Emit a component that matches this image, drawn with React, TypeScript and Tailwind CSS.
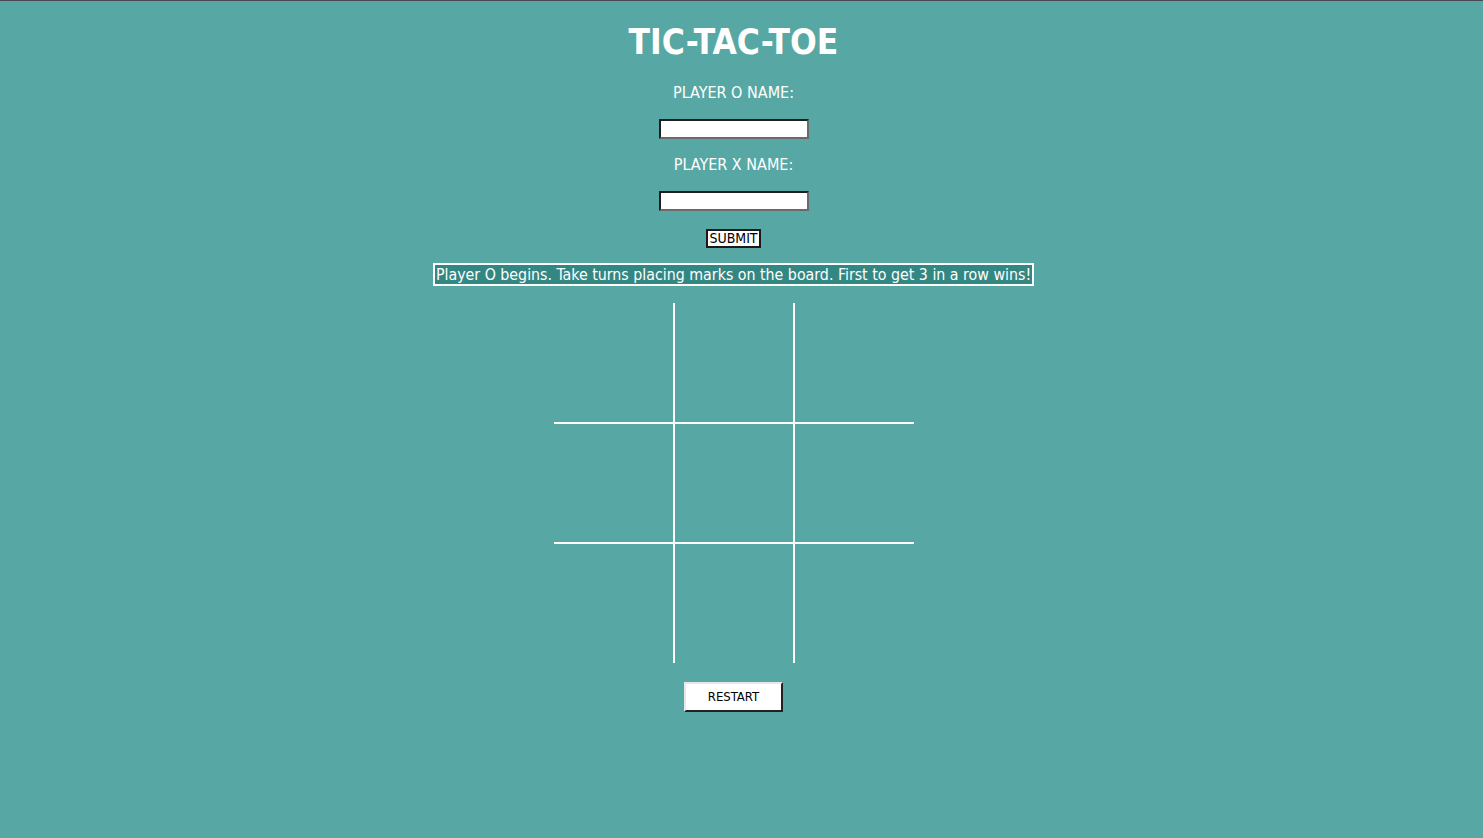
import { useState } from "react";

type Mark = "O" | "X" | null;

export default function App() {
  const [nameO, setNameO] = useState("");
  const [nameX, setNameX] = useState("");
  const [board, setBoard] = useState<Mark[]>(Array(9).fill(null));
  const [turn, setTurn] = useState<"O" | "X">("O");

  const play = (i: number) => {
    if (board[i]) return;
    const next = board.slice();
    next[i] = turn;
    setBoard(next);
    setTurn(turn === "O" ? "X" : "O");
  };

  const restart = () => {
    setBoard(Array(9).fill(null));
    setTurn("O");
  };

  return (
    <div
      className="min-h-screen w-full bg-[#57a8a4] border-t border-[#4a4a52] pr-4 flex flex-col items-center text-white"
      style={{ fontFamily: '"DejaVu Sans", Verdana, sans-serif', fontStretch: "condensed" }}
    >
      <h1 className="mt-[21px] h-10 leading-10 text-[35px] font-bold">TIC-TAC-TOE</h1>

      <label className="mt-[19px] h-6 leading-6 text-base">PLAYER O NAME:</label>
      <input
        value={nameO}
        onChange={(e) => setNameO(e.target.value)}
        className="mt-[14px] w-[150px] h-5 bg-white text-black border-2 border-t-[#1e1e1e] border-l-[#1e1e1e] border-b-[#6a6a6a] border-r-[#6a6a6a] outline-none px-1 text-sm"
      />

      <label className="mt-[14px] h-6 leading-6 text-base">PLAYER X NAME:</label>
      <input
        value={nameX}
        onChange={(e) => setNameX(e.target.value)}
        className="mt-[14px] w-[150px] h-5 bg-white text-black border-2 border-t-[#1e1e1e] border-l-[#1e1e1e] border-b-[#6a6a6a] border-r-[#6a6a6a] outline-none px-1 text-sm"
      />

      <button className="mt-[18px] h-[19px] px-px bg-white text-black text-[14px] leading-[15px] border-2 border-[#1a1a1a]">
        SUBMIT
      </button>

      <div className="mt-[15px] h-[23px] px-px bg-[#338783] border-2 border-white text-[15.8px] leading-[19px] whitespace-nowrap">
        Player O begins. Take turns placing marks on the board. First to get 3 in a row wins!
      </div>

      <div className="mt-[17px] grid grid-cols-[119px_118px_119px] grid-rows-[119px_118px_119px] gap-[2px] bg-white">
        {board.map((m, i) => (
          <div
            key={i}
            onClick={() => play(i)}
            className="bg-[#57a8a4] flex items-center justify-center text-6xl font-bold cursor-pointer"
          >
            {m}
          </div>
        ))}
      </div>

      <button
        onClick={restart}
        className="mt-[19px] w-[99px] h-[30px] bg-white text-black text-[13px] border-2 border-t-[#e8e8e8] border-l-[#e8e8e8] border-b-[#222] border-r-[#222]"
      >
        RESTART
      </button>
    </div>
  );
}
